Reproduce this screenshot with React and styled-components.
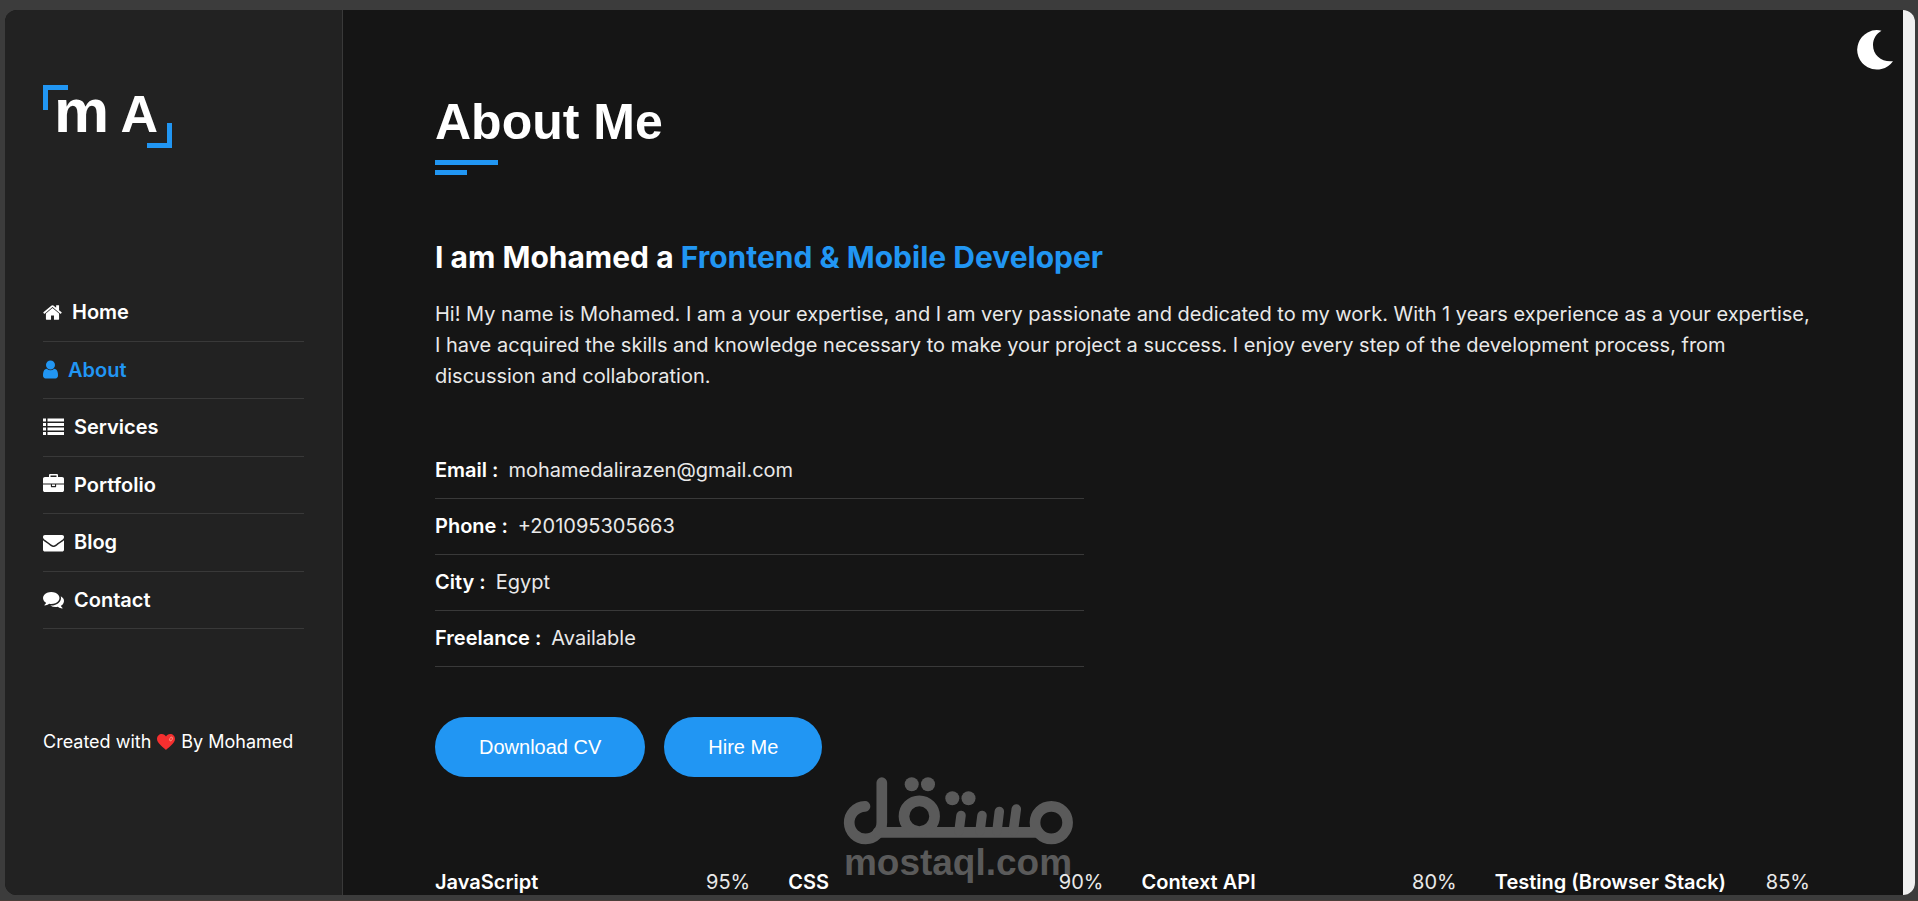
import React from "react";
import styled, { createGlobalStyle } from "styled-components";

const accent = "#2196f3";
const rule = "#393939";

const GlobalStyle = createGlobalStyle`
  *, *::before, *::after { box-sizing: border-box; }
  body {
    margin: 0;
    background: #3c3c3c;
    font-family: Inter, "Noto Sans", sans-serif;
    font-size: 20px;
    color: #e9e9e9;
  }
  h1, h2, p, ul, dl, dd, dt { margin: 0; padding: 0; }
  ul { list-style: none; }
`;

const Desktop = styled.div`
  height: 100vh;
  padding: 10px 3px 5px 5px;
  border-bottom: 1px solid #4a3d38;
  overflow: hidden;
`;

const Frame = styled.div`
  position: relative;
  z-index: 0;
  display: flex;
  height: 100%;
  border-radius: 12px;
  background: #151515;
  overflow: hidden;
`;

const Sidebar = styled.aside`
  flex: none;
  width: 338px;
  padding: 75px 38px 0;
  background: #222;
  border-right: 1px solid ${rule};
`;

const Logo = styled.a`
  position: relative;
  display: flex;
  justify-content: space-between;
  align-items: baseline;
  width: 129px;
  height: 63px;
  padding: 0 14px 0 11px;
  color: #fff;
  font-family: "Liberation Sans", sans-serif;
  font-weight: 700;
  line-height: 52px;
  text-decoration: none;

  &::before,
  &::after {
    content: "";
    position: absolute;
    width: 25px;
    height: 25px;
    border: 0 solid ${accent};
  }
  &::before { top: 0; left: 0; border-width: 5px 0 0 5px; }
  &::after { right: 0; bottom: 0; border-width: 0 5px 5px 0; }
`;

const Initial = styled.span`
  font-size: ${(p) => p.$size}px;
`;

const Menu = styled.ul`
  display: grid;
  grid-auto-rows: 1fr;
  height: 345px;
  margin-top: 136px;
`;

const MenuItem = styled.li`
  display: flex;
  border-bottom: 1px solid ${rule};
`;

const MenuLink = styled.a`
  display: flex;
  align-items: center;
  gap: 10px;
  flex: 1;
  color: ${(p) => (p.$active ? accent : "#fff")};
  font-weight: 600;
  text-decoration: none;

  svg { fill: currentColor; height: 21px; }
`;

const Credit = styled.p`
  display: flex;
  align-items: center;
  gap: 6px;
  margin-top: 98px;
  color: #fff;
  font-size: 18px;
  line-height: 30px;
  white-space: nowrap;
`;

const Main = styled.main`
  flex: 1;
  min-width: 0;
  padding: 82px 93px 0 92px;
`;

const Title = styled.h1`
  color: #fff;
  font-family: "Liberation Sans", sans-serif;
  font-size: 50px;
  line-height: 60px;
`;

const Underline = styled.div`
  width: ${(p) => p.$width}px;
  height: 5px;
  margin-top: ${(p) => p.$gap}px;
  background: ${accent};
`;

const Headline = styled.h2`
  margin-top: 62px;
  color: #fff;
  font-size: 30px;
  font-weight: 700;
  line-height: 40px;

  span { color: ${accent}; }
`;

const Intro = styled.p`
  margin-top: 22px;
  line-height: 31px;
`;

const Details = styled.dl`
  width: calc(50% - 39px);
  min-width: 320px;
  margin-top: 51px;
`;

const Detail = styled.div`
  display: flex;
  align-items: center;
  gap: 10px;
  height: 56px;
  padding-bottom: 2px;
  border-bottom: 1px solid ${rule};

  dt { color: #fff; font-weight: 600; }
`;

const Actions = styled.div`
  display: flex;
  gap: 19px;
  margin-top: 50px;
`;

const PillButton = styled.button`
  height: 60px;
  padding: 0 44px;
  border: 0;
  border-radius: 30px;
  background: ${accent};
  color: #fff;
  font-family: "Liberation Sans", sans-serif;
  font-size: 20px;
`;

const Skills = styled.ul`
  display: grid;
  grid-template-columns: repeat(4, 1fr);
  gap: 38px;
  margin-top: 90px;
`;

const Skill = styled.li`
  display: flex;
  justify-content: space-between;
  line-height: 30px;
  white-space: nowrap;

  strong { color: #fff; font-weight: 600; }
`;

const ThemeToggle = styled.button`
  position: absolute;
  top: 20px;
  right: 22px;
  display: flex;
  padding: 0;
  border: 0;
  background: none;
`;

const ScrollTrack = styled.div`
  flex: none;
  width: 12px;
  background: #f0f0f0;
`;

const Watermark = styled.div`
  position: absolute;
  z-index: -1;
  left: 0;
  right: 4px;
  bottom: 14px;
  display: flex;
  flex-direction: column;
  align-items: center;
  color: #5a5a5a;
  font-family: "Liberation Sans", sans-serif;
  font-size: 37px;
  font-weight: 700;
  line-height: 36px;
`;

const icons = {
  home: {
    width: 19,
    box: "64 0 1664 1792",
    d: "M1472 992v480q0 26-19 45t-45 19h-384v-384h-256v384h-384q-26 0-45-19t-19-45v-480q0-1 .5-3t.5-3l575-474 575 474q1 2 1 6zm223-69l-62 74q-8 9-21 11h-3q-13 0-21-7l-692-577-692 577q-12 8-24 7-13-2-21-11l-62-74q-8-10-7-23.5t11-21.5l719-599q32-26 76-26t76 26l244 204v-195q0-14 9-23t23-9h192q14 0 23 9t9 23v408l219 182q10 8 11 21.5t-7 23.5z",
  },
  user: {
    width: 15,
    box: "256 0 1280 1792",
    d: "M1536 1399q0 109-62.5 187t-150.5 78h-854q-88 0-150.5-78t-62.5-187q0-85 8.5-160.5t31.5-152 58.5-131 94-89 134.5-34.5q131 128 313 128t313-128q76 0 134.5 34.5t94 89 58.5 131 31.5 152 8.5 160.5zm-256-887q0 159-112.5 271.5t-271.5 112.5-271.5-112.5-112.5-271.5 112.5-271.5 271.5-112.5 271.5 112.5 112.5 271.5z",
  },
  list: {
    width: 21,
    box: "0 0 1792 1792",
    d: "M0 128h256v256H0zM384 128h1408v256H384zM0 512h256v256H0zM384 512h1408v256H384zM0 896h256v256H0zM384 896h1408v256H384zM0 1280h256v256H0zM384 1280h1408v256H384z",
  },
  briefcase: {
    width: 21,
    box: "0 0 1792 1792",
    d: "M640 256h512v-128h-512v128zm1152 640v480q0 66-47 113t-113 47h-1472q-66 0-113-47t-47-113v-480h672v160q0 26 19 45t45 19h320q26 0 45-19t19-45v-160h672zm-768 0v128h-256v-128h256zm768-480v384h-1792v-384q0-66 47-113t113-47h352v-160q0-40 28-68t68-28h576q40 0 68 28t28 68v160h352q66 0 113 47t47 113z",
  },
  envelope: {
    width: 21,
    box: "0 0 1792 1792",
    d: "M1792 710v794q0 66-47 113t-113 47h-1472q-66 0-113-47t-47-113v-794q44 49 101 87 362 246 497 345 57 42 92.5 65.5t94.5 48 110 24.5h2q51 0 110-24.5t94.5-48 92.5-65.5q170-123 498-345 57-39 100-87zm0-294q0 79-49 151t-122 123q-376 261-468 325-10 7-42.5 31t-54 38.5-52 32.5-57.5 27-50 9h-2q-23 0-50-9t-57.5-27-52-32.5-54-38.5-42.5-31q-91-64-262-182.5t-205-142.5q-62-42-117-115.5t-55-136.5q0-78 41.5-130t118.5-52h1472q65 0 112.5 47t47.5 113z",
  },
  comments: {
    width: 21,
    box: "0 0 1792 1792",
    d: "M1408 768q0 139-94 257t-256.5 186.5-353.5 68.5q-86 0-176-16-124 88-278 128-36 9-86 16h-3q-11 0-20.5-8t-11.5-21q-1-3-1-6.5t.5-6.5 2-6l2.5-5 3.5-5.5 4-5 4.5-5 4-4.5q5-6 23-25t26-29.5 22.5-29 25-38.5 20.5-44q-124-72-195-177t-71-224q0-139 94-257t256.5-186.5 353.5-68.5 353.5 68.5 256.5 186.5 94 257zm384 256q0 120-71 224.5t-195 176.5q10 24 20.5 44t25 38.5 22.5 29 26 29.5 23 25q1 1 4 4.5t4.5 5 4 5 3.5 5.5l2.5 5 2 6 .5 6.5-1 6.5q-3 14-13 22t-22 7q-50-7-86-16-154-40-278-128-90 16-176 16-271 0-472-132 58 4 88 4 161 0 309-45t264-129q125-92 192-212t67-254q0-77-23-152 129 71 204 178t75 230z",
  },
};

const menu = [
  ["Home", "home"],
  ["About", "user"],
  ["Services", "list"],
  ["Portfolio", "briefcase"],
  ["Blog", "envelope"],
  ["Contact", "comments"],
];

const details = [
  ["Email :", "mohamedalirazen@gmail.com"],
  ["Phone :", "+201095305663"],
  ["City :", "Egypt"],
  ["Freelance :", "Available"],
];

const skills = [
  ["JavaScript", "95%"],
  ["CSS", "90%"],
  ["Context API", "80%"],
  ["Testing (Browser Stack)", "85%"],
];

function Icon({ name }) {
  const { width, box, d } = icons[name];
  return (
    <svg width={width} height="21" viewBox={box} aria-hidden="true">
      <path d={d} />
    </svg>
  );
}

function Heart() {
  return (
    <svg width="18" height="16" viewBox="0 0 18 16" aria-hidden="true">
      <path
        d="M9 16C7 13.6 0 9.500 0 5C0 2 2.200 0 4.800 0C6.700 0 8.200 1 9 2.500C9.800 1 11.300 0 13.200 0C15.800 0 18 2 18 5C18 9.500 11 13.600 9 16Z"
        fill="#f52f2f"
      />
      <ellipse cx="14" cy="5" rx="1.200" ry="2.100" transform="rotate(25 14 5)" fill="none" stroke="#f7a08a" strokeWidth="0.800" />
    </svg>
  );
}

function Moon() {
  return (
    <svg width="36" height="40" viewBox="0 0 36 40" aria-hidden="true">
      <path
        d="M24.500 0.700A19.700 19.700 0 1 0 36 31.200C25 32.500 16 25.500 16 15C16 8.500 19.500 3.500 24.500 0.700Z"
        fill="#fff"
      />
    </svg>
  );
}

function WatermarkLogo() {
  return (
    <svg width="230" height="68" viewBox="24 17 230 68" aria-hidden="true">
      <g fill="none" stroke="currentColor" strokeWidth="10.700" strokeLinecap="round">
        <path d="M46 46.300A16.300 16.300 0 1 0 62.800 62.500V22.700" />
        <path d="M59 72.300H217" />
        <circle cx="232.300" cy="62.600" r="16.300" />
        <circle cx="100.300" cy="56.200" r="15.300" />
        <path d="M142 55.500L140 71M163 55.500L161 71M180.300 51.500L178 71M197.300 49L194.300 71" strokeWidth="9.500" />
      </g>
      <g fill="currentColor">
        <circle cx="92.700" cy="24.300" r="7" />
        <circle cx="109" cy="24.300" r="7" />
        <circle cx="133.300" cy="38.300" r="7" />
        <circle cx="149.500" cy="38.300" r="7" />
      </g>
    </svg>
  );
}

export default function App() {
  return (
    <Desktop>
      <GlobalStyle />
      <Frame>
        <Sidebar>
          <Logo href="#home">
            <Initial $size={62}>m</Initial>
            <Initial $size={52}>A</Initial>
          </Logo>
          <nav>
            <Menu>
              {menu.map(([label, icon]) => (
                <MenuItem key={label}>
                  <MenuLink href={`#${label.toLowerCase()}`} $active={label === "About"}>
                    <Icon name={icon} />
                    {label}
                  </MenuLink>
                </MenuItem>
              ))}
            </Menu>
          </nav>
          <Credit>
            <span>Created with</span>
            <Heart />
            <span>By Mohamed</span>
          </Credit>
        </Sidebar>
        <Main>
          <Title>About Me</Title>
          <Underline $width={63} $gap={8} />
          <Underline $width={32} $gap={5} />
          <Headline>
            I am Mohamed a <span>Frontend &amp; Mobile Developer</span>
          </Headline>
          <Intro>
            Hi! My name is Mohamed. I am a your expertise, and I am very passionate and dedicated to my work. With 1
            years experience as a your expertise, I have acquired the skills and knowledge necessary to make your
            project a success. I enjoy every step of the development process, from discussion and collaboration.
          </Intro>
          <Details>
            {details.map(([term, value]) => (
              <Detail key={term}>
                <dt>{term}</dt>
                <dd>{value}</dd>
              </Detail>
            ))}
          </Details>
          <Actions>
            <PillButton type="button">Download CV</PillButton>
            <PillButton type="button">Hire Me</PillButton>
          </Actions>
          <Skills>
            {skills.map(([name, level]) => (
              <Skill key={name}>
                <strong>{name}</strong>
                <span>{level}</span>
              </Skill>
            ))}
          </Skills>
        </Main>
        <ThemeToggle type="button" aria-label="Toggle theme">
          <Moon />
        </ThemeToggle>
        <ScrollTrack />
        <Watermark>
          <WatermarkLogo />
          mostaql.com
        </Watermark>
      </Frame>
    </Desktop>
  );
}
